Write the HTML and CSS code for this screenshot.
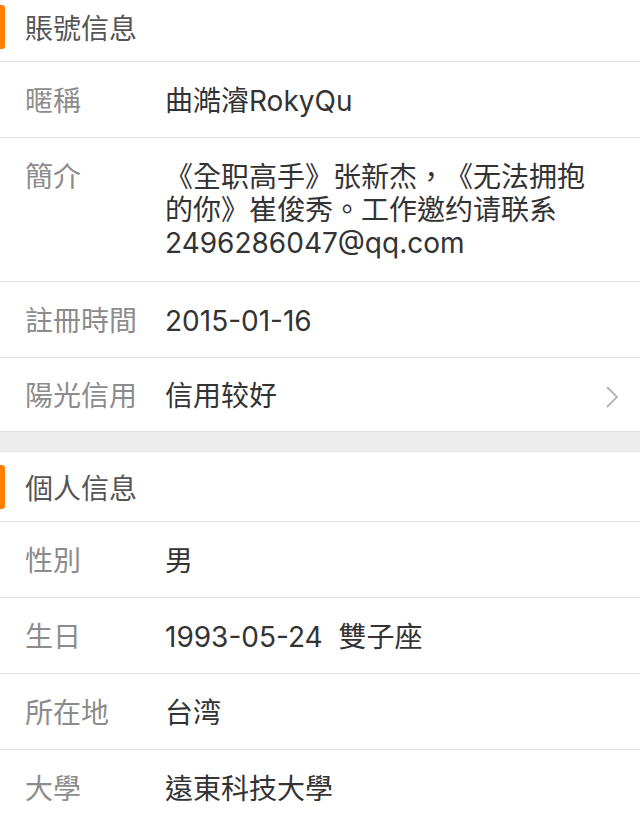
FILE: index.html
```html
<!DOCTYPE html>
<html lang="zh-Hant">
<head>
  <meta charset="UTF-8">
  <meta name="viewport" content="width=device-width, initial-scale=1.0">
  <title>個人資料</title>
  <link rel="stylesheet" href="styles.css">
</head>
<body>
  <div class="page">
    <!-- Account -->
    <section class="group">
      <div class="group-title"><span class="mark"></span>賬號信息</div>
      <div class="row">
        <span class="label">暱稱</span>
        <span class="value">曲澔濬RokyQu</span>
      </div>
      <div class="row tall">
        <span class="label">簡介</span>
        <span class="value">《全职高手》张新杰，《无法拥抱的你》崔俊秀。工作邀约请联系2496286047@qq.com</span>
      </div>
      <div class="row">
        <span class="label">註冊時間</span>
        <span class="value">2015-01-16</span>
      </div>
      <div class="row link">
        <span class="label">陽光信用</span>
        <span class="value">信用较好</span>
        <svg class="chevron" width="12" height="22" viewBox="0 0 12 22">
          <polyline points="1,1 11,11 1,21" fill="none" stroke="#b3b3b3" stroke-width="1.8"/>
        </svg>
      </div>
    </section>

    <div class="gap"></div>

    <!-- Personal -->
    <section class="group">
      <div class="group-title"><span class="mark"></span>個人信息</div>
      <div class="row">
        <span class="label">性別</span>
        <span class="value">男</span>
      </div>
      <div class="row">
        <span class="label">生日</span>
        <span class="value">1993-05-24&nbsp;&nbsp;雙子座</span>
      </div>
      <div class="row">
        <span class="label">所在地</span>
        <span class="value">台湾</span>
      </div>
      <div class="row">
        <span class="label">大學</span>
        <span class="value">遠東科技大學</span>
      </div>
    </section>
  </div>
</body>
</html>
```

FILE: styles.css
```css
body {
  margin: 0;
  background: #fff;
  font-family: Inter, "Noto Sans CJK TC", sans-serif;
  font-size: 28px;
  text-spacing-trim: space-all;
  overflow: hidden;
}
.page {
  margin-top: -8px;
}
.group-title {
  display: flex;
  align-items: center;
  height: 69px;
  border-bottom: 1px solid #e2e2e2;
  color: #555;
}
.mark {
  width: 5px;
  height: 44px;
  margin-right: 20px;
  background: #ff8000;
  border-radius: 0 3px 3px 0;
}
.row {
  display: flex;
  align-items: flex-start;
  padding: 23px 22px 19px 25px;
  line-height: 33px;
  border-bottom: 1px solid #e2e2e2;
}
.row.tall {
  padding-bottom: 21px;
}
.label {
  flex: 0 0 140px;
  color: #8c8c8c;
}
.value {
  flex: 1;
  color: #333;
  padding-right: 30px;
}
.row.link {
  align-items: center;
  padding-top: 22px;
  padding-bottom: 18px;
}
.chevron {
  flex: none;
}
.gap {
  height: 19px;
  background: #ededed;
  border-bottom: 1px solid #e2e2e2;
}
```
